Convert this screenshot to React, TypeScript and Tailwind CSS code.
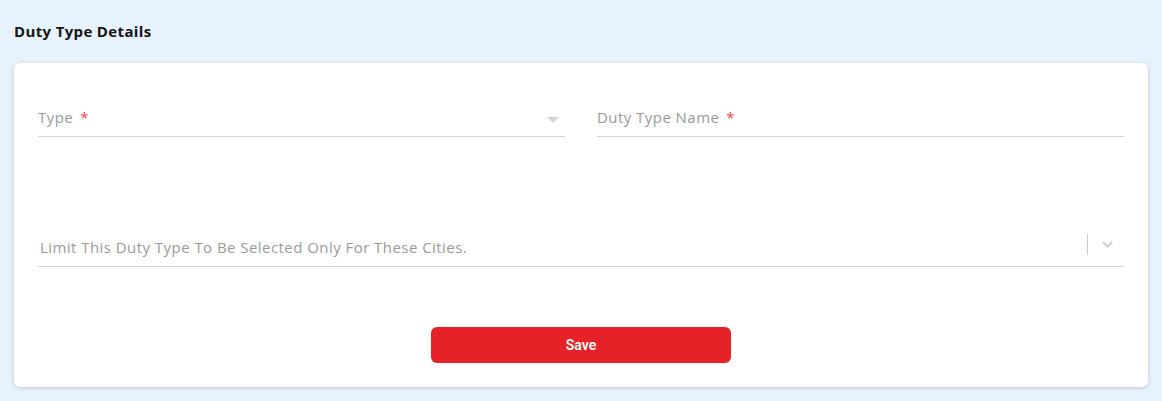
import { ChevronDown } from 'lucide-react';

function Star() {
  return <span className="ml-[7px] text-[#f0434f]">*</span>;
}

function UnderlineField({ label, required, select }: { label: string; required?: boolean; select?: boolean }) {
  return (
    <div className="flex h-[48px] flex-1 items-end border-b border-[#d2d2d2] pb-[9px]">
      <span className="flex-1 text-[15px] leading-[20px] tracking-[0.45px] text-[#9a9a9a]">
        {label}
        {required && <Star />}
      </span>
      {select && (
        <svg width="12" height="7" viewBox="0 0 12 7" className="mr-[6px] mb-[3px]">
          <path d="M0 0 L12 0 L6 6 Z" fill="#d4d4d4" />
        </svg>
      )}
    </div>
  );
}

export default function App() {
  return (
    <div className="min-h-[401px] bg-[#e6f2fe] px-[14px] pb-[14px] font-['Open_Sans',sans-serif]">
      <h2 className="pt-[22px] text-[15px] leading-[18px] font-bold tracking-[0.35px] text-[#151515]">
        Duty Type Details
      </h2>

      <div className="mt-[23px] rounded-[6px] bg-white px-[24px] pt-[26px] pb-[24px] shadow-[0_1px_4px_rgba(0,0,0,0.18)]">
        <div className="flex gap-[32px]">
          <UnderlineField label="Type" required select />
          <UnderlineField label="Duty Type Name" required />
        </div>

        <div className="mt-[82px] flex h-[48px] items-end border-b border-[#d2d2d2] pb-[9px]">
          <span className="ml-[2px] flex-1 text-[15px] leading-[20px] tracking-[0.45px] text-[#9a9a9a]">
            Limit This Duty Type To Be Selected Only For These Cities.
          </span>
          <div className="mb-[2px] flex items-center">
            <span className="block h-[21px] w-px bg-[#cccccc]" />
            <ChevronDown className="mr-[8px] ml-[11px] text-[#cccccc]" size={17} strokeWidth={2.5} />
          </div>
        </div>

        <div className="mt-[60px] flex justify-center">
          <button className="h-[36px] w-[300px] rounded-[6px] bg-[#e52228] text-[14px] font-semibold text-white font-['Roboto',sans-serif]">
            Save
          </button>
        </div>
      </div>
    </div>
  );
}
